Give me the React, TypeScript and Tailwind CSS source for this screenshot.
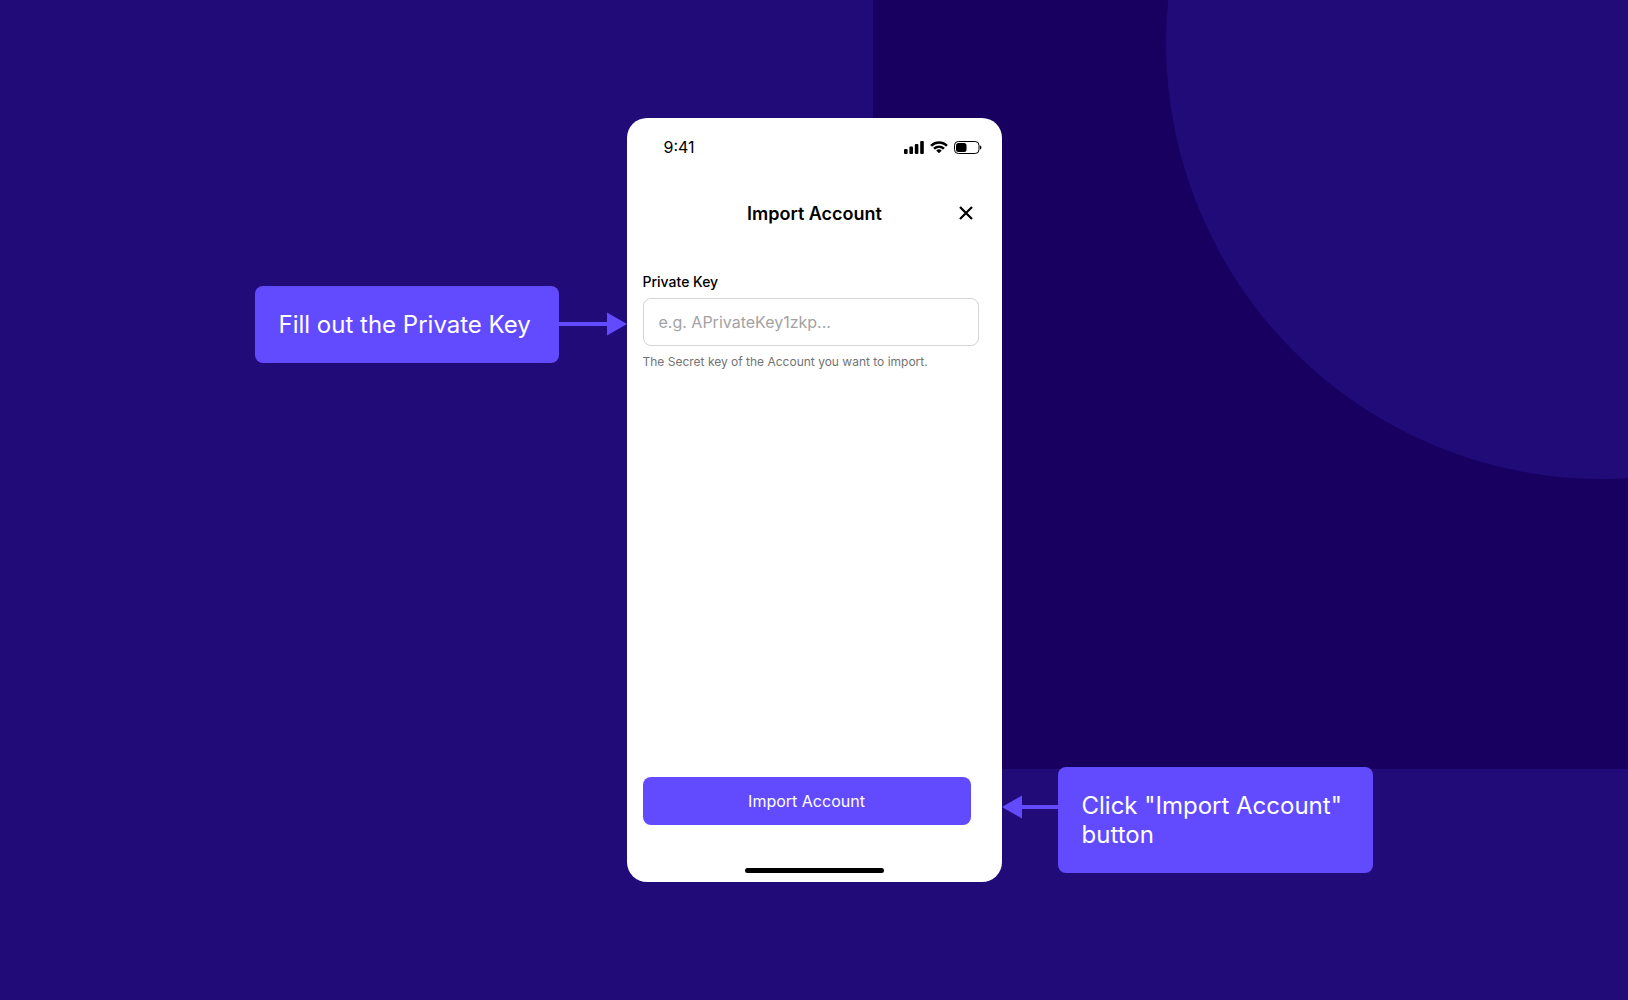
import { ReactNode } from "react"

function Signal() {
  return (
    <svg width="20" height="13" viewBox="0 0 20 13" fill="currentColor">
      <rect x="0" y="8" width="3.600" height="5" rx="1" />
      <rect x="5.400" y="5.500" width="3.600" height="7.500" rx="1" />
      <rect x="10.800" y="3" width="3.600" height="10" rx="1" />
      <rect x="16.200" y="0" width="3.600" height="13" rx="1" />
    </svg>
  )
}

function Wifi() {
  return (
    <svg width="18" height="13" viewBox="0 0 17 12" fill="currentColor">
      <path d="M8.5 2.5c2.4 0 4.7.9 6.4 2.5.1.1.3.1.5 0l1.2-1.2c.1-.2.1-.4 0-.5a11.8 11.8 0 0 0-16.2 0c-.1.1-.1.3 0 .5L1.600 5c.2.100.4.100.5 0A9.300 9.300 0 0 1 8.500 2.500z" />
      <path d="M8.500 6.400c1.300 0 2.600.5 3.500 1.400.2.100.4.100.5 0l1.200-1.200c.2-.2.200-.4 0-.5a7.600 7.600 0 0 0-10.400 0c-.2.100-.2.300 0 .5l1.200 1.200c.1.100.3.100.5 0 .9-.9 2.200-1.400 3.500-1.400z" />
      <path d="M10.900 9.100c.1-.1.100-.3 0-.5a3.700 3.700 0 0 0-4.800 0c-.1.200-.1.400 0 .5l2.100 2.100c.200.100.4.100.5 0z" />
    </svg>
  )
}

function Battery() {
  return (
    <svg width="28" height="13" viewBox="0 0 28 13" fill="currentColor">
      <rect x="0.500" y="0.500" width="24.500" height="12" rx="3.800" fill="none" stroke="currentColor" />
      <path d="M26 4.500c1 .4 1.400 1.100 1.400 2s-.4 1.600-1.400 2z" />
      <rect x="2" y="2" width="10.500" height="9" rx="2.500" />
    </svg>
  )
}

function Callout({ children }: { children: ReactNode }) {
  return (
    <p className="bg-[#624BFF] text-white text-[24px] leading-[29px] rounded-lg p-6">
      {children}
    </p>
  )
}

export default function App() {
  return (
    <main className="relative min-h-screen overflow-hidden bg-[#210B78] font-[Inter,sans-serif] flex flex-col justify-center">
      <div className="absolute top-0 right-0 w-[755px] h-[769px] bg-[#170060] overflow-hidden">
        <div className="absolute top-[-393px] left-[293px] w-[872px] h-[872px] rounded-full bg-[#210B78]"></div>
      </div>

      <div className="relative grid grid-cols-[1fr_375px_1fr]">
        <div className="flex items-start justify-end self-start mt-[168px]">
          <div className="w-[304px]">
            <Callout>Fill out the Private Key</Callout>
          </div>
          <svg width="68" height="24" viewBox="0 0 68 24" fill="#624BFF" className="mt-[26px] shrink-0">
            <path d="M0 10h48V0.500L68 12 48 23.500V14H0z" />
          </svg>
        </div>

        <section className="bg-white text-black rounded-[20px] h-[764px] flex flex-col">
          <div className="flex items-center justify-between pl-[37px] pr-5 pt-[19px]">
            <span className="text-[16px] leading-5">9:41</span>
            <div className="flex items-center gap-1.5">
              <Signal />
              <Wifi />
              <Battery />
            </div>
          </div>

          <header className="grid grid-cols-[1fr_auto_1fr] items-center mt-[37px] pl-[25px] pr-6">
            <h1 className="col-start-2 text-[18px] leading-10 font-semibold">Import Account</h1>
            <button aria-label="Close" className="justify-self-end">
              <svg width="24" height="24" viewBox="0 0 24 24" stroke="currentColor" strokeWidth="2.200" className="block">
                <path d="M6 5l12 12M18 5L6 17" />
              </svg>
            </button>
          </header>

          <form className="flex flex-col grow px-4 pt-[34px] pb-[9px]" onSubmit={(e) => e.preventDefault()}>
            <label htmlFor="key" className="text-[14px] leading-5 font-medium pt-1 pb-1.5">
              Private Key
            </label>
            <input
              id="key"
              type="text"
              placeholder="e.g. APrivateKey1zkp..."
              className="h-12 mr-[7px] px-[15px] rounded-lg border border-[#D4D4D4] text-[16px] placeholder:text-[#A3A3A3]"
            />
            <p className="text-[12px] leading-4 text-[#737373] mt-2">
              The Secret key of the Account you want to import.
            </p>
            <button className="mt-auto h-12 mr-[15px] rounded-lg bg-[#624BFF] text-white text-[16px]">
              Import Account
            </button>
            <div className="self-center w-[139px] h-[5px] mt-[43px] rounded-full bg-black"></div>
          </form>
        </section>

        <div className="flex items-start self-start mt-[649px]">
          <svg width="56" height="24" viewBox="0 0 56 24" fill="#624BFF" className="mt-7 shrink-0">
            <path d="M56 10H20V0.500L0 12 20 23.500V14h36z" />
          </svg>
          <div className="w-[315px]">
            <Callout>Click "Import Account" button</Callout>
          </div>
        </div>
      </div>
    </main>
  )
}
